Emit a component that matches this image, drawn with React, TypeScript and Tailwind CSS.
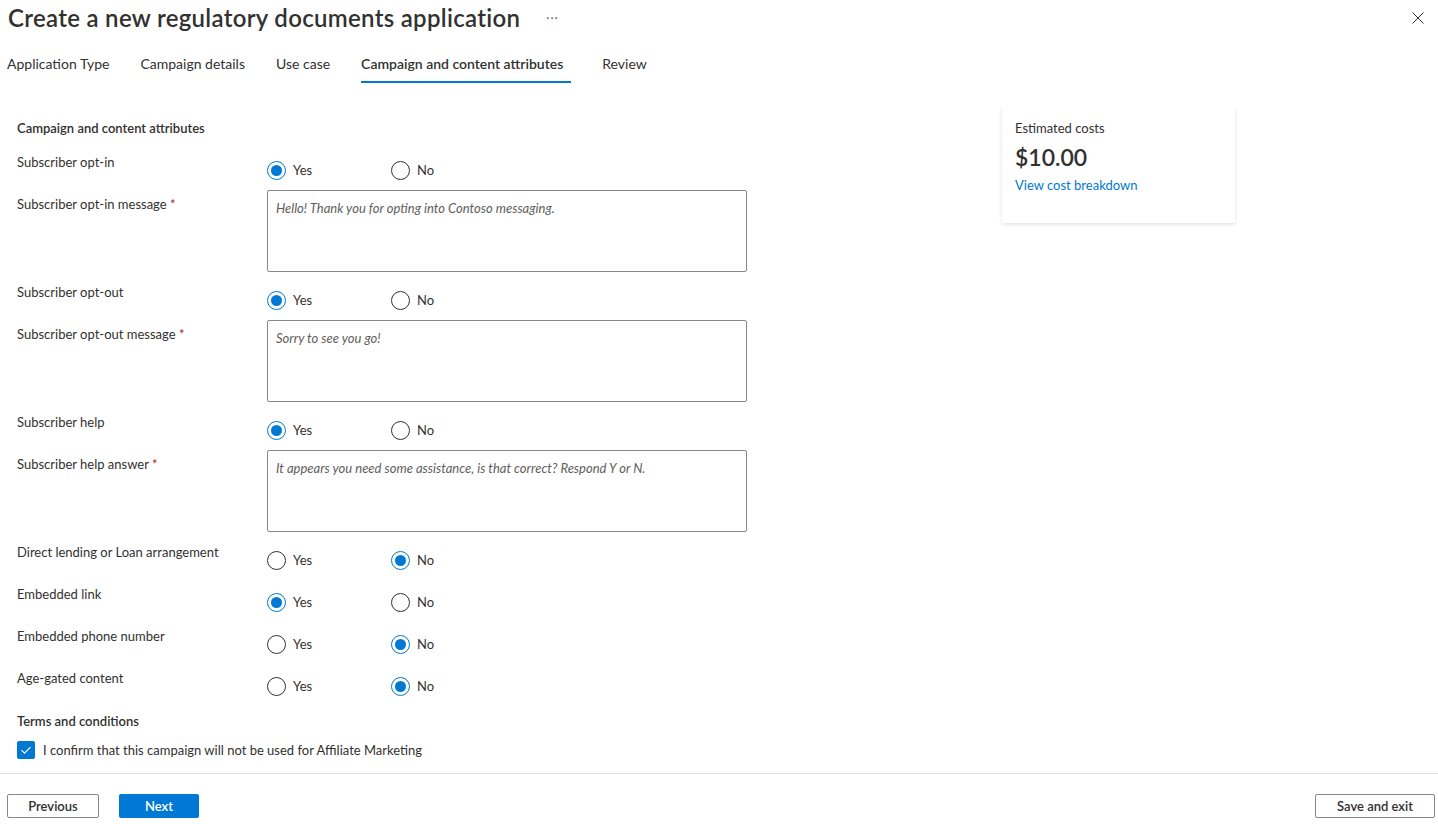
import React from "react";

const font = { fontFamily: 'Lato, "Noto Sans", sans-serif' };

function Radio({ checked, label }: { checked: boolean; label: string }) {
  return (
    <div className="flex items-center w-[124px]">
      <span
        className={
          "w-[19px] h-[19px] rounded-full border flex items-center justify-center " +
          (checked ? "border-[#0078d4]" : "border-[#323130]")
        }
      >
        {checked && <span className="w-[11px] h-[11px] rounded-full bg-[#0078d4]" />}
      </span>
      <span className="ml-[7px] text-[13px] leading-[20px] text-[#323130]">{label}</span>
    </div>
  );
}

function RadioRow({ label, yes, h }: { label: string; yes: boolean; h: string }) {
  return (
    <div className={"flex " + h}>
      <div className="w-[250px] text-[13px] leading-[20px] text-[#323130]">{label}</div>
      <div className="flex mt-[8px] h-[20px] items-center">
        <Radio checked={yes} label="Yes" />
        <Radio checked={!yes} label="No" />
      </div>
    </div>
  );
}

function TextRow({ label, text }: { label: string; text: string }) {
  return (
    <div className="flex h-[82px] mb-[10px]">
      <div className="w-[250px] mt-[4px] text-[13px] leading-[20px] text-[#323130]">
        {label} <span className="text-[#a4262c]">*</span>
      </div>
      <div className="w-[480px] h-[82px] border border-[#8a8886] rounded-[2px] px-[8px] pt-[8px] text-[13px] leading-[18px] italic text-[#605e5c]">
        {text}
      </div>
    </div>
  );
}

export default function App() {
  const tabs = ["Application Type", "Campaign details", "Use case", "Campaign and content attributes", "Review"];
  return (
    <div className="w-[1438px] h-[824px] bg-white flex flex-col overflow-hidden" style={font}>
      <div className="flex items-center h-[36px] pl-[8px] pr-[14px]">
        <h1 className="text-[24px] leading-[32px] font-semibold tracking-[0.3px] text-[#323130]">
          Create a new regulatory documents application
        </h1>
        <span className="ml-[26px] text-[12px] text-[#605e5c] tracking-[1px]">···</span>
        <div className="flex-1" />
        <svg width="12" height="12" viewBox="0 0 12 12">
          <path d="M0.5 0.5 L11.5 11.5 M11.5 0.5 L0.5 11.5" stroke="#323130" strokeWidth="1" />
        </svg>
      </div>
      <div className="flex h-[48px] pl-[7px] pt-[9px]">
        {tabs.map((t, i) => {
          const active = i === 3;
          return (
            <div key={t} className="mr-[31px] flex flex-col">
              <div
                className={
                  "h-[36px] flex items-center text-[14px] text-[#323130] " + (active ? "font-semibold pr-[8px]" : "")
                }
              >
                {t}
              </div>
              <div className={"h-[2px] " + (active ? "bg-[#0078d4]" : "")} />
            </div>
          );
        })}
      </div>
      <div className="flex flex-1">
        <div className="w-[1002px] pl-[17px] pt-[34px]">
          <div className="text-[13px] leading-[20px] font-semibold text-[#323130] h-[34px]">
            Campaign and content attributes
          </div>
          <RadioRow label="Subscriber opt-in" yes={true} h="h-[38px]" />
          <TextRow label="Subscriber opt-in message" text="Hello! Thank you for opting into Contoso messaging." />
          <RadioRow label="Subscriber opt-out" yes={true} h="h-[38px]" />
          <TextRow label="Subscriber opt-out message" text="Sorry to see you go!" />
          <RadioRow label="Subscriber help" yes={true} h="h-[38px]" />
          <TextRow
            label="Subscriber help answer"
            text="It appears you need some assistance, is that correct? Respond Y or N."
          />
          <RadioRow label="Direct lending or Loan arrangement" yes={false} h="h-[42px]" />
          <RadioRow label="Embedded link" yes={true} h="h-[42px]" />
          <RadioRow label="Embedded phone number" yes={false} h="h-[42px]" />
          <RadioRow label="Age-gated content" yes={false} h="h-[43px]" />
          <div className="text-[13px] leading-[20px] font-semibold text-[#323130] h-[29px]">
            Terms and conditions
          </div>
          <div className="flex items-center h-[20px]">
            <span className="w-[18px] h-[18px] rounded-[2px] bg-[#0078d4] flex items-center justify-center">
              <svg width="12" height="12" viewBox="0 0 12 12">
                <path d="M1.5 6.2 L4.5 9.2 L10.5 3.2" stroke="white" strokeWidth="1.2" fill="none" />
              </svg>
            </span>
            <span className="ml-[8px] text-[13px] leading-[20px] text-[#323130]">
              I confirm that this campaign will not be used for Affiliate Marketing
            </span>
          </div>
        </div>
        <div className="pt-[22px]">
          <div className="w-[233px] h-[117px] bg-white shadow-[0_1.6px_3.6px_rgba(0,0,0,0.13),0_0.3px_0.9px_rgba(0,0,0,0.11)] px-[13px] pt-[13px]">
            <div className="text-[13px] leading-[18px] text-[#323130]">Estimated costs</div>
            <div className="text-[23px] leading-[30px] font-semibold text-[#323130] mt-[5px]">$10.00</div>
            <div className="text-[13px] leading-[18px] text-[#0078d4] mt-[4px]">View cost breakdown</div>
          </div>
        </div>
      </div>
      <div className="h-[51px] border-t border-[#e1dfdd] flex items-start pt-[20px] px-[7px]">
        <button className="w-[92px] h-[24px] pt-[2px] border border-[#8a8886] rounded-[2px] text-[13px] font-semibold text-[#323130] flex items-center justify-center">
          Previous
        </button>
        <button className="ml-[20px] w-[80px] h-[24px] pt-[2px] bg-[#0078d4] rounded-[2px] text-[13px] font-semibold text-white flex items-center justify-center">
          Next
        </button>
        <div className="flex-1" />
        <button className="mr-[-4px] w-[120px] h-[24px] pt-[2px] border border-[#8a8886] rounded-[2px] text-[13px] font-semibold text-[#323130] flex items-center justify-center">
          Save and exit
        </button>
      </div>
    </div>
  );
}
